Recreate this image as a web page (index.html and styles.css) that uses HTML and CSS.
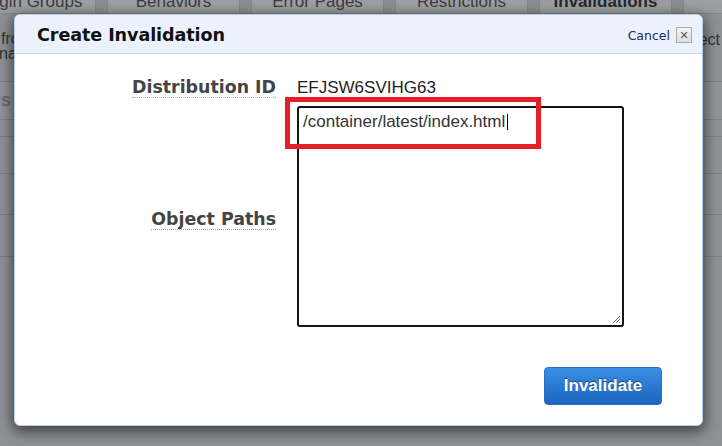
FILE: index.html
```html
<!DOCTYPE html>
<html>
<head>
<meta charset="utf-8">
<link rel="stylesheet" href="styles.css">
</head>
<body>
<div class="page">
  <div class="tabs">
    <div class="tab">Origin Groups</div>
    <div class="tab">Behaviors</div>
    <div class="tab">Error Pages</div>
    <div class="tab">Restrictions</div>
    <div class="tab active">Invalidations</div>
    <div class="tab">Tags</div>
  </div>
  <div class="row intro">
    <div class="intro-left">
      <span>from</span>
      <span class="shift">name</span>
    </div>
    <div class="intro-right">Select</div>
  </div>
  <div class="row head"><span>ls</span></div>
  <div class="row thin"></div>
  <div class="row mid"></div>
  <div class="row mid2"></div>
  <div class="row mid3"></div>
  <div class="row rest"></div>
</div>

<div class="dialog">
  <div class="dlg-header">
    <h1 class="dlg-title">Create Invalidation</h1>
    <div class="dlg-actions">
      <a class="cancel">Cancel</a>
      <span class="close">&#x2715;</span>
    </div>
  </div>
  <div class="dlg-body">
    <div class="form">
      <div class="label-cell"><span class="label">Distribution ID</span></div>
      <div class="value">EFJSW6SVIHG63</div>
      <div class="label-cell paths"><span class="label">Object Paths</span></div>
      <div class="textarea">
        <span class="ta-text">/container/latest/index.html</span><span class="caret"></span>
        <svg class="grip" width="9" height="9" viewBox="0 0 9 9"><path d="M8 1 L1 8 M8 4 L4 8 M8 7 L7 8" stroke="#777" stroke-width="1" fill="none"/></svg>
      </div>
    </div>
    <div class="btn-row">
      <button class="btn">Invalidate</button>
    </div>
  </div>
</div>

<div class="annot"></div>
</body>
</html>
```

FILE: styles.css
```css
* { box-sizing: border-box; }
html, body { margin: 0; padding: 0; }
body {
  width: 722px;
  height: 446px;
  overflow: hidden;
  background: #8e9195;
  font-family: "Liberation Sans", Arial, sans-serif;
  position: relative;
}

/* background page (dimmed) */
.page { width: 722px; color: #3b3d40; }
.tabs {
  display: flex;
  gap: 11px;
  margin-left: -37px;
  margin-top: -8px;
  height: 22px;
  background: #8c8e91;
  border-bottom: 1px solid #818386;
  overflow: hidden;
}
.tab {
  flex: 0 0 133px;
  height: 22px;
  line-height: 20px;
  font-size: 17px;
  text-align: center;
  background: linear-gradient(#a2a4a7, #989a9d);
  border-left: 1px solid #85878a;
  border-right: 1px solid #85878a;
  color: #3a3c3f;
  white-space: nowrap;
}
.tab.active { font-weight: bold; color: #26282a; background: #9b9da0; }

.row { border-bottom: 1px solid #7d8083; }
.intro {
  height: 68px;
  display: flex;
  justify-content: space-between;
  font-size: 16px;
  color: #323437;
}
.intro-left { display: flex; flex-direction: column; padding-top: 17px; line-height: 15px; padding-left: 1px; }
.intro-left .shift { margin-left: -2px; }
.intro-right { padding-top: 17px; padding-right: 2px; }
.head {
  height: 38px;
  font-weight: bold;
  font-size: 18px;
  color: #696c70;
  padding-top: 8px;
  margin-left: -4px;
  background: #919498;
}
.thin { height: 17px; }
.mid { height: 37px; }
.mid2 { height: 41px; }
.mid3 { height: 42px; }
.rest { border-bottom: 0; }

/* dialog */
.dialog {
  position: absolute;
  left: 14px;
  top: 14px;
  width: 689px;
  height: 412px;
  background: #fff;
  border: 1px solid #b7cde6;
  border-radius: 6px;
  box-shadow: 0 4px 14px 2px rgba(0, 0, 0, 0.55);
  display: flex;
  flex-direction: column;
  overflow: hidden;
}
.dlg-header {
  height: 39px;
  flex: 0 0 39px;
  background: #ebf2fc;
  border-bottom: 1px solid #c6dbf1;
  display: flex;
  align-items: center;
  justify-content: space-between;
  padding: 2px 10px 0 22px;
}
.dlg-title {
  margin: 0;
  font-family: "DejaVu Sans", Verdana, sans-serif;
  font-weight: bold;
  font-size: 17.6px;
  color: #111;
  letter-spacing: -0.1px;
}
.dlg-actions { display: flex; align-items: center; gap: 6px; }
.cancel {
  font-family: "DejaVu Sans", Verdana, sans-serif;
  font-size: 12.5px;
  color: #24246e;
}
.close {
  width: 16px;
  height: 16px;
  border: 1px solid #a9abae;
  background: linear-gradient(#f4f4f4, #dedede);
  font-size: 11px;
  font-weight: bold;
  color: #555;
  display: flex;
  align-items: center;
  justify-content: center;
  font-family: "DejaVu Sans", sans-serif;
}

.dlg-body {
  flex: 1;
  padding: 23px 40px 0 0;
  display: flex;
  flex-direction: column;
}
.form {
  display: grid;
  grid-template-columns: 261px 327px;
  column-gap: 21px;
  row-gap: 8px;
  align-items: start;
}
.label-cell { text-align: right; }
.label {
  display: inline-block;
  font-family: "DejaVu Sans", Verdana, sans-serif;
  font-weight: bold;
  font-size: 17.4px;
  line-height: 20px;
  color: #444;
  border-bottom: 1px dotted #a8a8a8;
}
.paths { align-self: center; margin-top: 6px; }
.value {
  font-size: 17px;
  line-height: 20px;
  color: #1e1e1e;
  padding-top: 1px;
}
.textarea {
  position: relative;
  height: 221px;
  border: 2px solid #151515;
  border-radius: 3px;
  padding: 4px 4px;
  font-size: 17px;
  line-height: 20px;
  color: #333;
}
.caret {
  display: inline-block;
  width: 1px;
  height: 16px;
  background: #000;
  vertical-align: -3px;
  margin-left: 2px;
}
.grip { position: absolute; right: 1px; bottom: 1px; }

.btn-row {
  display: flex;
  justify-content: flex-end;
  margin-top: 40px;
}
.btn {
  width: 118px;
  height: 38px;
  border: 1px solid #2a6cbf;
  border-radius: 4px;
  background: linear-gradient(#3a8fe4, #1b64bf);
  color: #fff;
  font-family: "Liberation Sans", Arial, sans-serif;
  font-weight: bold;
  font-size: 17px;
  text-shadow: 0 -1px 1px rgba(0, 0, 0, 0.45);
  padding: 0;
}

/* annotation rectangle */
.annot {
  position: absolute;
  left: 285px;
  top: 97px;
  width: 256px;
  height: 52px;
  border: 5px solid #e41e26;
}
```
